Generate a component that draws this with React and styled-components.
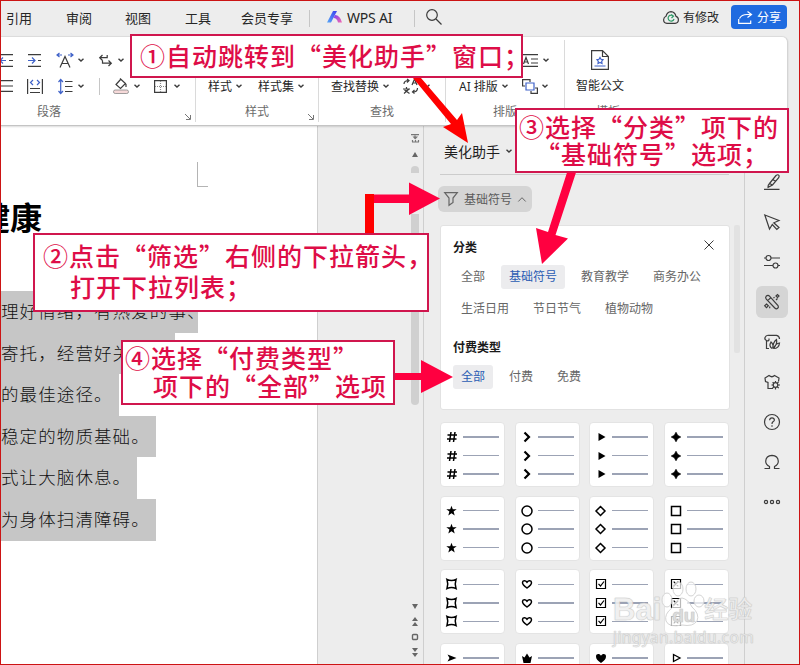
import styled, { createGlobalStyle } from "styled-components";

const GlobalStyle = createGlobalStyle`
    * {
        box-sizing: border-box;
    }
    body {
        margin: 0;
        font-family: "Noto Sans", "Noto Sans CJK SC", sans-serif;
        font-size: 12px;
        color: #262626;
    }
    svg {
        display: block;
        flex: none;
        overflow: visible;
    }
`

const Window = styled.div`
    position: relative;
    display: flex;
    flex-direction: column;
    width: 800px;
    height: 665px;
    overflow: hidden;
    background: #ededed;

    &::after {
        content: "";
        position: absolute;
        inset: 0;
        border: 1px solid #cc1414;
        pointer-events: none;
    }
`

const MenuBar = styled.header`
    display: flex;
    align-items: center;
    flex: none;
    height: 36px;
    padding: 0 13px 0 6px;
`

const Tab = styled.span`
    width: ${(p) => p.$w}px;
    font-size: 13px;
    line-height: 20px;
    margin-top: -1px;
    white-space: nowrap;
`

const BarLine = styled.i`
    width: 1px;
    height: 17px;
    background: #c6c6c6;
`

const AiTab = styled.div`
    display: flex;
    align-items: center;
    gap: 5px;
    width: 104px;
    margin-top: -2px;
    padding-left: 17px;
    font-size: 14px;
    letter-spacing: -0.2px;
    white-space: nowrap;
`

const SearchSlot = styled.div`
    flex: 1;
    margin-top: -2px;
    padding-left: 11px;
`

const SaveState = styled.div`
    display: flex;
    align-items: center;
    gap: 4px;
    width: 68px;
    margin-top: -2px;
    white-space: nowrap;
`

const ShareButton = styled.button`
    display: flex;
    align-items: center;
    gap: 5px;
    width: 56px;
    height: 24px;
    margin-top: -2px;
    padding: 0 0 0 7px;
    border: 0;
    border-radius: 4px;
    background: #1f6be0;
    color: #fff;
    font: inherit;
    white-space: nowrap;
`

const Ribbon = styled.div`
    position: relative;
    display: flex;
    flex: none;
    width: 788px;
    height: 90px;
    background: #fff;
    border-top: 1px solid #dcdcdc;
    border-right: 1px solid #d4d4d4;
    border-bottom: 1px solid #c4c4c4;
    border-radius: 0 6px 0 0;
    box-shadow: 0 1px 2px rgba(0, 0, 0, 0.14);
`

const Group = styled.section`
    display: flex;
    flex-direction: column;
    width: ${(p) => p.$w}px;
    height: 82px;
    margin-top: 3px;
    padding-top: 7px;
    border-right: 1px solid ${(p) => (p.$last ? "transparent" : "#dadada")};
`

const Tools = styled.div`
    display: flex;
    align-items: center;
    height: 27px;
`

const Tool = styled.span`
    display: flex;
    align-items: center;
    gap: ${(p) => p.$gap ?? 8}px;
    margin-left: ${(p) => p.$ml}px;
    white-space: nowrap;
`

const GroupFoot = styled.div`
    display: flex;
    align-items: center;
    height: 23px;
    padding-left: ${(p) => p.$ml}px;
    color: #6b6b6b;
    white-space: nowrap;

    svg {
        margin: 12px 4px 0 auto;
    }
`

const DocTool = styled.div`
    display: flex;
    flex-direction: column;
    align-items: center;
    gap: 7px;
    width: 70px;
    height: 56px;
    padding-top: 3px;
    line-height: 18px;
`

const Body = styled.div`
    display: flex;
    flex: 1;
    min-height: 0;
    overflow: hidden;
`

const Page = styled.article`
    width: 318px;
    padding-top: 36px;
    background: #fff;
    border-right: 1px solid #cfcfcf;
    overflow: hidden;
`

const PageCorner = styled.div`
    width: 11px;
    height: 25px;
    margin-left: 197px;
    border-left: 1px solid #b4b4b4;
    border-bottom: 1px solid #b4b4b4;
`

const Heading = styled.h1`
    margin: 5px 0 48px -22px;
    font-size: 32px;
    line-height: 51px;
    font-weight: 700;
    color: #000;
    white-space: nowrap;
`

const Line = styled.p`
    width: ${(p) => p.$w}px;
    height: 41.6px;
    margin: 0;
    padding-left: 1px;
    background: #c6c6c6;
    color: #111;
    font-family: "Noto Sans CJK SC", sans-serif;
    font-weight: 300;
    font-size: 17.5px;
    letter-spacing: 1.1px;
    line-height: 39px;
    white-space: nowrap;
    overflow: hidden;
`

const Scroller = styled.div`
    display: flex;
    flex-direction: column;
    align-items: center;
    width: 17px;
    margin-left: 89px;
    padding-top: 8px;
    border-right: 1px solid #cfcfcf;
`

const Thumb = styled.i`
    width: 8px;
    height: ${(p) => p.$h}px;
    margin-top: ${(p) => p.$mt}px;
    background: #d0d0d0;
    border-radius: ${(p) => p.$r};
`

const ScrollMarks = styled.div`
    display: flex;
    flex-direction: column;
    align-items: center;
    gap: 8px;
    margin-top: 199px;
`

const Panel = styled.aside`
    display: flex;
    flex-direction: column;
    width: 305px;
    padding: 10px 0 0 16px;
`

const PanelTitle = styled.div`
    display: flex;
    align-items: center;
    gap: 6px;
    flex: none;
    width: 289px;
    height: 39px;
    padding: 0 0 8px 4px;
    border-bottom: 1px solid #cccccc;
    font-size: 14px;
    color: #1f1f1f;
`

const FilterButton = styled.button`
    display: flex;
    align-items: center;
    gap: 6px;
    flex: none;
    width: 94px;
    height: 26px;
    margin: 11px 0 13px -2px;
    padding: 0 0 0 6px;
    border: 0;
    border-radius: 6px;
    background: #d5d5d5;
    color: #5c5c5c;
    font: inherit;
    white-space: nowrap;
`

const FilterCard = styled.div`
    flex: none;
    width: 290px;
    height: 185px;
    padding: 12px 12px 0;
    background: #fff;
    border: 1px solid #e2e2e2;
    border-radius: 3px;
`

const CardHead = styled.div`
    display: flex;
    justify-content: space-between;
    align-items: center;
    height: 18px;
    margin-bottom: 9px;
    padding-right: 3px;
    font-weight: 600;
    color: #1a1a1a;

    svg {
        margin-top: -5px;
    }
`

const TagList = styled.div`
    display: flex;
    flex-wrap: wrap;
    gap: 8px;
    margin-bottom: ${(p) => p.$mb ?? 0}px;
`

const Tag = styled.span`
    height: 24px;
    padding: 0 8px;
    line-height: 23px;
    border-radius: 3px;
    white-space: nowrap;
    background: ${(p) => (p.$active ? "#ececee" : "transparent")};
    color: ${(p) => (p.$active ? "#2b5cb3" : "#666")};
`

const BulletGrid = styled.div`
    display: grid;
    flex: none;
    grid-template-columns: repeat(4, 65px);
    grid-auto-rows: 65px;
    gap: 8.7px 9.7px;
    margin-top: 12px;
`

const BulletCard = styled.div`
    display: flex;
    flex-direction: column;
    gap: 4.5px;
    padding: 7px 0 0 4px;
    background: #fff;
    border: 1px solid #e4e4e4;
    border-radius: 4px;
`

const BulletRow = styled.div`
    display: flex;
    align-items: center;
    gap: 4px;
    height: 14px;

    &::after {
        content: "";
        width: 36px;
        height: 1.5px;
        background: #9ca3b5;
    }
`

const PanelScroll = styled.i`
    width: 6px;
    height: 128px;
    margin: 99px 4px 0 5px;
    background: #e2e2e2;
    border-radius: 2px;
`

const SideBar = styled.nav`
    display: flex;
    flex-direction: column;
    align-items: center;
    gap: 8px;
    width: 55px;
    border-left: 1px solid #cfcfcf;
`

const SideButton = styled.span`
    display: flex;
    align-items: center;
    justify-content: center;
    flex: none;
    width: 32px;
    height: 32px;
    border-radius: 6px;
    background: ${(p) => (p.$active ? "#d5d5d5" : "transparent")};
`

const Arrows = styled.svg`
    position: absolute;
    left: 0;
    top: 0;
`

const Callout = styled.div`
    position: absolute;
    left: ${(p) => p.$x}px;
    top: ${(p) => p.$y}px;
    width: ${(p) => p.$w}px;
    height: ${(p) => p.$h}px;
    padding: ${(p) => p.$pad};
    background: #fff;
    border: 2px solid #d0164e;
    color: #de0d47;
    font-family: "Noto Sans CJK SC", sans-serif;
    font-size: 25px;
    letter-spacing: 1px;
    font-weight: 500;
    line-height: ${(p) => p.$lh}px;
    white-space: nowrap;

    div + div {
        padding-left: ${(p) => p.$indent}px;
    }
`

const Watermark = styled.div`
    position: absolute;
    left: 613px;
    top: 580px;
    width: 142px;
    color: rgba(255, 255, 255, 0.8);
    text-shadow: 0 0 1px rgba(120, 120, 120, 0.5);
    -webkit-text-stroke: 0.4px #cdcdcd;
    font-family: "Liberation Sans", "Noto Sans CJK SC", sans-serif;
    white-space: nowrap;
`

const MarkTop = styled.div`
    display: flex;
    align-items: flex-end;
    height: 48px;
    font-size: 31px;
    line-height: 36px;
    font-weight: 700;

    > span:last-child {
        font-size: 24px;
        font-weight: 500;
    }
`

const Paw = styled.div`
    position: relative;
    flex: none;
    width: 43px;
    height: 48px;

    span {
        position: absolute;
        left: 11px;
        bottom: 2px;
        font-size: 19px;
        line-height: 20px;
        color: #dcdcdc;
    }
`

const MarkUrl = styled.div`
    font-family: "Noto Sans", sans-serif;
    font-size: 15.5px;
    line-height: 18px;
    letter-spacing: 0.4px;
`

const Icon = ({ w = 16, h = w, sw = 1.2, color = "#3c3c3c", children }) => (
    <svg width={w} height={h} viewBox={`0 0 ${w} ${h}`} fill="none" stroke={color} strokeWidth={sw}>
        {children}
    </svg>
);

const Chevron = () => (
    <Icon w={6} h={4} sw={1.4}><path d="M.5 .7 3 3 5.5 .7" /></Icon>
);

const Launcher = () => (
    <Icon w={6} sw={1} color="#777"><path d="M0 0 5 5M5.5 1v4.5H1" /></Icon>
);

const blue = "#3f62c9";

// one glyph per bullet style, drawn in a 14 x 14 box
const bullets = [
    <path d="M6 2 4.500 12M10 2 8.500 12M2.500 5h9.500M2 9h9.500" strokeWidth="1.5" />,
    <path d="M4.500 2.500 9 7 4.500 11.500" strokeWidth="2.2" />,
    <path d="M4.500 3v8l7-4z" fill="#000" stroke="none" />,
    <path d="M7 2 8.800 5.200 12 7 8.800 8.800 7 12 5.200 8.800 2 7 5.200 5.200z" fill="#000" stroke="#000" strokeWidth=".4" />,
    <path d="M6.500 1.700 7.800 5.300H11.700L8.600 7.600 9.700 11.500 6.500 9.200 3.300 11.500 4.400 7.600 1.300 5.300H5.200z" fill="#000" stroke="none" />,
    <circle cx="7" cy="7" r="5" />,
    <path d="M6.500 2.500 11 7 6.500 11.500 2 7z" />,
    <path d="M2.500 2.500h9v9h-9z" />,
    <path d="M2 2.500Q6.500 4.500 11 2.500 9.500 7 11 11.500 6.500 9.500 2 11.500 3.500 7 2 2.500z" />,
    <path d="M7 11C4 8.800 2.500 7.500 2.500 5.700 2.500 3.400 5.500 3.200 7 5.200 8.500 3.200 11.500 3.400 11.500 5.700 11.500 7.500 10 8.800 7 11z" />,
    <path d="M2.500 2.500h9v9h-9zM4.500 6.800l2 2.200 3.500-4.500" strokeWidth="1.2" />,
    <path d="M2.500 2.500h9v9h-9zM4.700 4.700l4.600 4.600M9.300 4.700 4.700 9.300" strokeWidth="1.2" />,
    <path d="M2.500 3.500 11.500 7 2.500 10.500 4.500 7z" fill="#000" stroke="none" />,
    <path d="M2 5 4.500 6.500 7 2.500 9.500 6.500 12 5 10.500 12h-7z" fill="#000" stroke="none" />,
    <path d="M7 12C3.500 9.500 2 7.800 2 5.500 2 2.500 5.700 2.300 7 4.800 8.300 2.300 12 2.500 12 5.500 12 7.800 10.500 9.500 7 12z" fill="#000" stroke="none" />,
    <path d="M4.500 3.500v7L11 7z" strokeWidth="1.300" />,
];

const categories = ["全部", "基础符号", "教育教学", "商务办公", "生活日用", "节日节气", "植物动物"];
const payTypes = ["全部", "付费", "免费"];

const lines = [
    ["理好情绪，有热爱的事、", 198],
    ["寄托，经营好关", 175],
    ["的最佳途径。", 119],
    ["稳定的物质基础。", 156],
    ["式让大脑休息。", 137],
    ["为身体扫清障碍。", 156],
];

const sideIcons = [
    <path d="M2 2h12v12H2z" />,
    <><path d="M5.500 9.500 12 1.500Q14 0 15 1.500 15.500 2.500 14.500 4L8.500 11 4 13.300Q3.500 11.500 5.500 9.500zM5.500 9.500l3 1.500M9 5.500l2.500 2M0 15.400h15.500" /></>,
    <path d="M.8 1 15 6.500 9.800 8.800 15 13.500 12.800 15.500 8.300 10.500 5.500 15z" />,
    <path d="M0 4h2M7 4h9M0 11.500h9M14 11.500h2M4.500 1.500a2.500 2.500 0 1 0 0 5 2.500 2.500 0 0 0 0-5zM11.500 9a2.500 2.500 0 1 0 0 5 2.500 2.500 0 0 0 0-5z" />,
    <><path d="M2.200 2.200Q4 .5 5.700 2.300L14 11.500Q15 13.200 13.700 14.300 12.300 15.500 10.800 14L2.300 5.200Q1 3.700 2.200 2.200zM3.700 6.700 6.800 3.600" /><path d="M12 2 13.500 .5 15 2 13.500 3.500zM9.500 4.200l1-1M2.500 10 4.300 11.800 2.500 13.600 .7 11.800zM5.700 12.500v1.800M13.500 4.500 12 6" /></>,
    <><path d="M5 14.500H2.500V6.500Q.3 5.500 1 3.500 2 1 4.500 1.300H12.500Q15.500 2 15.500 5M5 4.500V6Q4.500 7.500 2.500 6.500" /><path d="M8 14.500Q4.500 12 7 8 10 10.500 8.700 14.500 9 8 12.500 5.500 13.500 10 9.500 14.500 11.500 9.500 15.500 9 15 14.500 9.500 14.500" /></>,
    <><path d="M9 14.500H4V8.500L1.500 7.500 1 4 5 1.500Q8 4 10.500 1.500L15 4 14.500 7.500" /><circle cx="11.500" cy="11" r="2.300" /><path d="M11.500 7v1.500M11.500 13.500v2M7.500 11H9M14 11h2M8.600 8.200l1.200 1.100M14.500 8 13.300 9.200M8.600 14l1.200-1.200M13.300 12.800l1.500 1.300" /></>,
    <><circle cx="8" cy="8" r="7.500" /><path d="M5.600 6.200Q5.800 3.800 8 3.800T10.400 6Q10.300 7 9 7.800 8 8.500 8 10M8 11.300v1.400" /></>,
    <path d="M.5 14.500H5.500V12.500Q1.700 10.500 1.700 7.200 2 1.500 8 1.300 14 1.500 14.300 7.200 14.300 10.500 10.500 12.500V14.500H15.500" />,
    <><circle cx="2" cy="8" r="1.600" /><circle cx="8" cy="8" r="1.600" /><circle cx="14" cy="8" r="1.600" /></>,
];

const TopBar = () => (
    <MenuBar>
        <Tab $w={60}>引用</Tab>
        <Tab $w={59}>审阅</Tab>
        <Tab $w={60}>视图</Tab>
        <Tab $w={56}>工具</Tab>
        <Tab $w={68}>会员专享</Tab>
        <BarLine />
        <AiTab>
            <svg width="15" height="12" viewBox="0 0 15 12">
                <defs>
                    <linearGradient id="aiLeft" x1="1" y1="0" x2="0" y2="1">
                        <stop offset="0" stopColor="#3b3ff0" />
                        <stop offset="1" stopColor="#56a6f5" />
                    </linearGradient>
                    <linearGradient id="aiRight" x1="0" y1="0" x2="1" y2="1">
                        <stop offset="0" stopColor="#7b3ff0" />
                        <stop offset="1" stopColor="#f56ab0" />
                    </linearGradient>
                </defs>
                <path d="M6 0h4L4 11.500H0z" fill="url(#aiLeft)" />
                <path d="M8 4Q13 4 15 11.500H11Q10 7 6.500 7z" fill="url(#aiRight)" />
            </svg>
            WPS AI
        </AiTab>
        <BarLine />
        <SearchSlot>
            <Icon w={16}><circle cx="6" cy="6" r="5.300" /><path d="M10 10l5.500 5.500" /></Icon>
        </SearchSlot>
        <SaveState>
            <Icon w={16} h={13}>
                <path d="M4 12.300Q.6 12 .6 8.700.8 6 3 5.300 4 .8 8 .6 12 .8 13 5.300 15.400 6 15.400 8.700 15.400 12 12 12.300z" />
                <path d="M10.500 5.300A3 3 0 1 0 11 8M8 3.500 10.500 5 8.500 7" stroke="#2f9b68" />
            </Icon>
            有修改
        </SaveState>
        <ShareButton>
            <Icon w={14} h={13} color="#fff"><path d="M.7 8v4.400h12V9.500M1.500 7.500Q3.500 3.500 9 3.500h4M9.500 .5l4 3-4 3" /></Icon>
            分享
        </ShareButton>
    </MenuBar>
);

const RibbonBar = () => (
    <Ribbon>
        <Group $w={196}>
            <Tools>
                <Tool $ml={0}><Icon w={14} h={13}><path d="M0 .7h13M9 6.500h4M0 12.300h13" /><path d="M0 6.500h6M3 3.500l-3 3 3 3" stroke={blue} /></Icon></Tool>
                <Tool $ml={14}><Icon w={14} h={13}><path d="M0 .7h13M10 6.500h3M0 12.300h13" /><path d="M0 6.500h7M4 3.500l3 3-3 3" stroke={blue} /></Icon></Tool>
                <Tool $ml={15} $gap={5}><Icon w={16} h={15}><path d="M3 14.500 8 3.500l5 11M4.800 10.500h6.400" /><path d="M0 2h5M2.500 0 0 2l2.500 2M16 2h-5M13.500 0 16 2l-2.500 2" stroke={blue} /></Icon><Chevron /></Tool>
                <Tool $ml={15} $gap={6}><Icon w={13} h={13}><path d="M3.500 1 .7 3.700 3.500 6.500M.7 3.700h7.500V1M9.500 6.500l2.800 2.700L9.500 12M12.300 9.200H3.500V6.500" /></Icon><Chevron /></Tool>
            </Tools>
            <Tools>
                <Tool $ml={0}><Icon w={14} h={12}><path d="M0 .7h13M0 6h13M0 11.300h13" /></Icon></Tool>
                <Tool $ml={13}><Icon w={16} h={15}><path d="M.6 0v15M15.400 0v15M3 9.500h10M3 13.500h10" /><path d="M6 1 3.500 3.500 6 6M10 1l2.500 2.500L10 6" stroke={blue} /></Icon></Tool>
                <Tool $ml={15} $gap={5}><Icon w={15} h={15}><path d="M7 2.500h7.500M7 7.500h7.500M7 12.500h7.500" /><path d="M2.700 .7v13.600M.5 3l2.200-2.500L5 3M.5 12l2.200 2.500L5 12" stroke={blue} /></Icon><Chevron /></Tool>
                <Tool $ml={15}><BarLine /></Tool>
                <Tool $ml={13} $gap={5}><Icon w={16} h={16}><path d="M8 1 3 6.500 7.500 10.500 12.500 5.500 7 .5M13 6v3" /><rect x=".5" y="12" width="15" height="3.500" rx="1.700" fill="#f6d9d9" stroke="#888" strokeWidth=".8" /></Icon><Chevron /></Tool>
                <Tool $ml={14} $gap={7}><Icon w={13} h={13}><path d="M.6 .6h11.800v11.800H.6z" /><path d="M6.500 1v11M1 6.500h11" strokeDasharray="1 1" stroke="#888" /></Icon><Chevron /></Tool>
            </Tools>
            <GroupFoot $ml={37}>段落<Launcher /></GroupFoot>
        </Group>
        <Group $w={123}>
            <Tools />
            <Tools>
                <Tool $ml={12} $gap={4}>样式<Chevron /></Tool>
                <Tool $ml={16} $gap={4}>样式集<Chevron /></Tool>
            </Tools>
            <GroupFoot $ml={49}>样式<Launcher /></GroupFoot>
        </Group>
        <Group $w={127}>
            <Tools />
            <Tools>
                <Tool $ml={12} $gap={4}>查找替换<Chevron /></Tool>
                <Tool $ml={14} $gap={6}>
                    <Icon w={15} h={15}><path d="M9 6 11.500 0 14 6M10 4h3M0 10h7M3.500 8v2M1 14.500l5-4.500M1.500 11l5 3.500M1 5Q1 1.500 6 1.500M4 0l2 1.500L4 3.500M14.500 9Q14.500 13 10 13M11.500 11 9.500 13l2 1.500" /></Icon>
                    <Chevron />
                </Tool>
            </Tools>
            <GroupFoot $ml={51}>查找</GroupFoot>
        </Group>
        <Group $w={119}>
            <Tools>
                <Tool $ml={77} $gap={5}><Icon w={15} h={13}><path d="M0 .6h15M0 12.400h15M.5 10 3 3.500 5.500 10M1.500 8h3M8 5h7M8 9h7" /></Icon><Chevron /></Tool>
            </Tools>
            <Tools>
                <Tool $ml={13} $gap={4}>AI 排版<Chevron /></Tool>
                <Tool $ml={14} $gap={4}><Icon w={16} h={15}><path d="M3 7H.6V.6H8V3M13 9h2.400v5.400H9V12" /><path d="M4 4h8v7H4z" stroke={blue} /></Icon><Chevron /></Tool>
            </Tools>
            <GroupFoot $ml={47}>排版</GroupFoot>
        </Group>
        <Group $w={222} $last>
            <DocTool>
                <Icon w={18} h={20}>
                    <path d="M.6 .6H11.500L17.400 6.500V19.400H.6zM11.500 .6V6.500H17.400" />
                    <path d="M9 7.500 10 9.300 12 9.700 10.700 11.300 11 13.500 9 12.500 7 13.500 7.300 11.300 6 9.700 8 9.300zM3.500 16h11" stroke={blue} />
                </Icon>
                智能公文
            </DocTool>
            <GroupFoot $ml={31}>模板</GroupFoot>
        </Group>
    </Ribbon>
);

const DocumentView = () => (
    <>
        <Page>
            <PageCorner />
            <Heading>健康</Heading>
            {lines.map(([text, width]) => (
                <Line key={text} $w={width}>{text}</Line>
            ))}
        </Page>
        <Scroller>
            <Icon w={9} h={9} color="#777"><path d="M0 .7h8M4 1.500v3M1 8h7M1.500 6v2M4.500 6v2M7.500 6v2" /><path d="M1.500 2.500h5.500L4.300 5.500z" fill="#777" stroke="none" /></Icon>
            <svg width="6" height="5" style={{ marginTop: 9 }}><path d="M0 5 3 0l3 5z" fill="#666" /></svg>
            <Thumb $h={7} $mt={9} $r="4px 4px 0 0" />
            <Thumb $h={191} $mt={41} $r="0 0 4px 4px" />
            <ScrollMarks>
                <svg width="6" height="5"><path d="M0 0h6L3 5z" fill="#666" /></svg>
                <svg width="6" height="9"><path d="M0 4 3 0l3 4zM0 9l3-4 3 4z" fill="#666" /></svg>
                <Icon w={6} sw={1.4} color="#666"><rect x=".5" y=".5" width="5" height="5" rx="1" /></Icon>
                <svg width="6" height="9"><path d="M0 0h6L3 4zM0 5h6L3 9z" fill="#666" /></svg>
            </ScrollMarks>
        </Scroller>
    </>
);

const BeautifyPanel = () => (
    <Panel>
        <PanelTitle>美化助手<Chevron /></PanelTitle>
        <FilterButton>
            <Icon w={14} h={14} color="#666"><path d="M.7 .7H13.300L9 6V10.500L5 13.300V6z" /></Icon>
            基础符号
            <Icon w={8} h={5} sw={1} color="#666"><path d="M.3 4.500 4 .7l3.700 3.800" /></Icon>
        </FilterButton>
        <FilterCard>
            <CardHead>
                分类
                <Icon w={10} sw={1}><path d="M.5 .5l9 9M9.500 .5l-9 9" /></Icon>
            </CardHead>
            <TagList $mb={17}>
                {categories.map((name) => (
                    <Tag key={name} $active={name === "基础符号"}>{name}</Tag>
                ))}
            </TagList>
            <CardHead>付费类型</CardHead>
            <TagList>
                {payTypes.map((name) => (
                    <Tag key={name} $active={name === "全部"}>{name}</Tag>
                ))}
            </TagList>
        </FilterCard>
        <BulletGrid>
            {bullets.map((glyph, i) => (
                <BulletCard key={i}>
                    {[0, 1, 2].map((n) => (
                        <BulletRow key={n}>
                            <Icon w={14} sw={1.5} color="#000">{glyph}</Icon>
                        </BulletRow>
                    ))}
                </BulletCard>
            ))}
        </BulletGrid>
    </Panel>
);

const App = () => {
    return (
        <Window>
            <GlobalStyle />
            <TopBar />
            <RibbonBar />
            <Body>
                <DocumentView />
                <BeautifyPanel />
                <PanelScroll />
                <SideBar>
                    {sideIcons.map((glyph, i) => (
                        <SideButton key={i} $active={i === 4}>
                            <Icon w={16}>{glyph}</Icon>
                        </SideButton>
                    ))}
                </SideBar>
            </Body>

            <Callout $x={130} $y={34} $w={393} $h={44} $lh={38} $pad="0 0 0 8px">
                <div>①自动跳转到“美化助手”窗口；</div>
            </Callout>
            <Callout $x={33} $y={233} $w={396} $h={79} $lh={31} $pad="5px 0 0 8px" $indent={27}>
                <div>②点击“筛选”右侧的下拉箭头，</div>
                <div>打开下拉列表；</div>
            </Callout>
            <Callout $x={515} $y={108} $w={274} $h={65} $lh={27} $pad="3px 0 0 2px" $indent={16}>
                <div>③选择“分类”项下的</div>
                <div>“基础符号”选项；</div>
            </Callout>
            <Callout $x={121} $y={340} $w={274} $h={65} $lh={27.5} $pad="2px 0 0 2px" $indent={28}>
                <div>④选择“付费类型”</div>
                <div>项下的“全部”选项</div>
            </Callout>

            <Arrows width="800" height="665">
                <path d="M413 78h8L457 120 462 113 468 143 443 127 451 124z" fill="#ff0000" />
                <path d="M365 194h9v39h-9z" fill="#ff0000" />
                <path d="M374 194.500h35V182.500L440 198.500 409 215V203H374z" fill="#ff0040" />
                <path d="M567 172.500h9L555.500 235 568 238.500 542 264 536 228 548 232z" fill="#ff0040" />
                <path d="M395 373h26V360L453 377 421 393V380H395z" fill="#ff0040" />
            </Arrows>

            <Watermark>
                <MarkTop>
                    <span>Bai</span>
                    <Paw>
                        <svg width="43" height="48" fill="rgba(255,255,255,.72)" stroke="#d4d4d4" strokeWidth="1">
                            <ellipse cx="6" cy="20" rx="5" ry="7" />
                            <ellipse cx="17" cy="9" rx="5" ry="7" />
                            <ellipse cx="30" cy="9" rx="5" ry="7" />
                            <ellipse cx="38" cy="21" rx="5" ry="6" />
                            <path d="M21 18Q27 19 31 27 39 34 36 41 32 47 21 45 8 48 5 41 3 34 11 28 16 18 21 18z" />
                        </svg>
                        <span>du</span>
                    </Paw>
                    <span>经验</span>
                </MarkTop>
                <MarkUrl>jingyan.baidu.com</MarkUrl>
            </Watermark>
        </Window>
    );
};

export default App;
